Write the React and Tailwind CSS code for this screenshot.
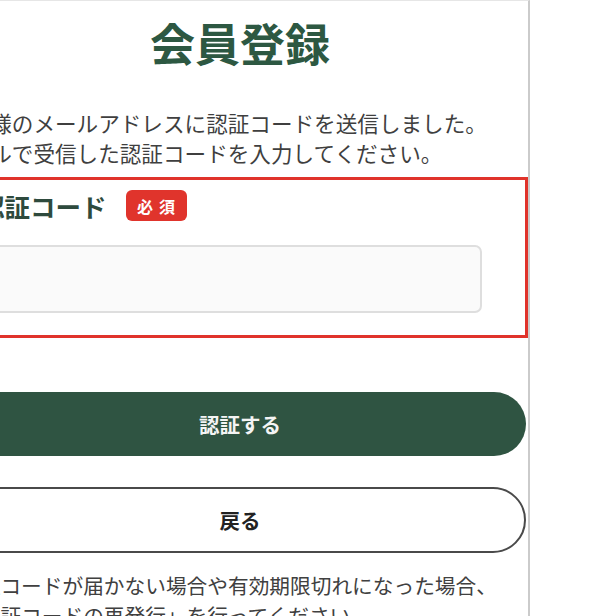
import React from 'react';

export default function App() {
  return (
    <div className="w-[616px] h-[616px] overflow-hidden bg-white font-['Noto_Sans_CJK_JP','Noto_Sans',sans-serif]">
      <div className="ml-[-80px] w-[610px] min-h-[616px] border-t border-[#e6e6e6] border-r-2 border-r-[#cbcbcb] bg-white pl-[34px] pr-[2px]">
        {/* title */}
        <h1 className="pt-[19px] text-center text-[45px] leading-[45px] font-bold text-[#2d5842]">会員登録</h1>

        <p className="mt-[43px] ml-[-7px] whitespace-nowrap text-[21.6px] leading-[30px] text-[#3f3f3f]">
          お客様のメールアドレスに認証コードを送信しました。<br />
          メールで受信した認証コードを入力してください。
        </p>

        {/* highlighted field */}
        <div className="mt-[9px] ml-[-16px] mr-[-2px] border-[3px] border-[#e0332b] pl-[38px] pt-[10px] pb-[22px]">
          <div className="flex items-center">
            <span className="text-[25.5px] leading-[31px] font-bold text-[#2e4a3d] whitespace-nowrap">認証コード</span>
            <span className="ml-[19px] flex h-[31px] w-[61px] items-center justify-center rounded-[6px] bg-[#e0342c] text-[16px] font-bold text-white tracking-[6px] pl-[6px]">必須</span>
          </div>
          <input
            type="text"
            className="mt-[24px] block h-[68px] w-[503px] rounded-[7px] border-2 border-[#dedede] bg-[#fafafa] px-4 text-[20px] outline-none"
          />
        </div>

        <button className="mt-[54px] flex h-[64px] w-full items-center justify-center rounded-full bg-[#2f5442] text-[20.5px] font-bold text-[#f4f4f4]">
          認証する
        </button>
        <button className="mt-[31px] flex h-[66px] w-full items-center justify-center rounded-full border-2 border-[#4a4a4a] bg-white text-[20.5px] font-bold text-[#222]">
          戻る
        </button>

        <p className="mt-[17px] ml-[5px] whitespace-nowrap text-[20.7px] leading-[30px] text-[#404040]">
          認証コードが届かない場合や有効期限切れになった場合、<br />
          「認証コードの再発行」を行ってください。
        </p>
      </div>
    </div>
  );
}
